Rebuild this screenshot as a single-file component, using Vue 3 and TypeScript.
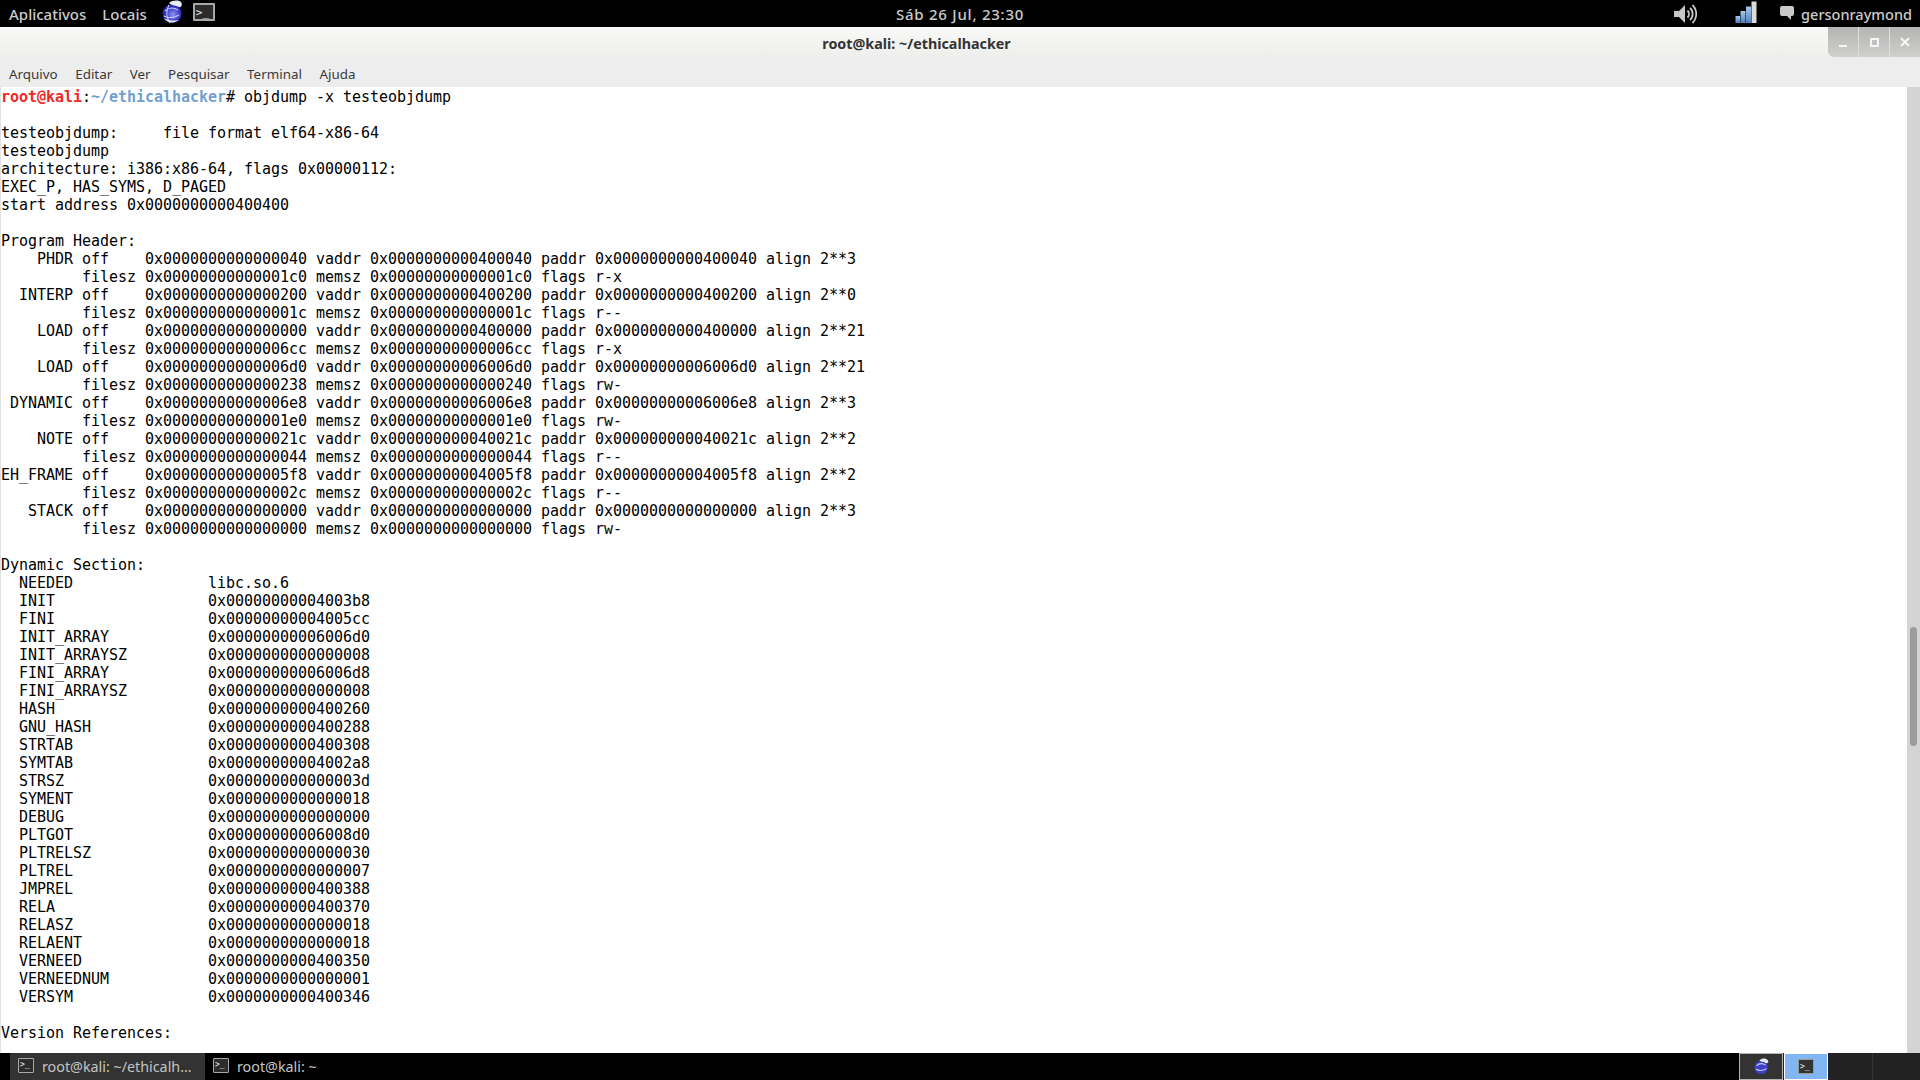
<script setup lang="ts">
const lines: string[] = [
  '',
  'testeobjdump:     file format elf64-x86-64',
  'testeobjdump',
  'architecture: i386:x86-64, flags 0x00000112:',
  'EXEC_P, HAS_SYMS, D_PAGED',
  'start address 0x0000000000400400',
  '',
  'Program Header:',
  '    PHDR off    0x0000000000000040 vaddr 0x0000000000400040 paddr 0x0000000000400040 align 2**3',
  '         filesz 0x00000000000001c0 memsz 0x00000000000001c0 flags r-x',
  '  INTERP off    0x0000000000000200 vaddr 0x0000000000400200 paddr 0x0000000000400200 align 2**0',
  '         filesz 0x000000000000001c memsz 0x000000000000001c flags r--',
  '    LOAD off    0x0000000000000000 vaddr 0x0000000000400000 paddr 0x0000000000400000 align 2**21',
  '         filesz 0x00000000000006cc memsz 0x00000000000006cc flags r-x',
  '    LOAD off    0x00000000000006d0 vaddr 0x00000000006006d0 paddr 0x00000000006006d0 align 2**21',
  '         filesz 0x0000000000000238 memsz 0x0000000000000240 flags rw-',
  ' DYNAMIC off    0x00000000000006e8 vaddr 0x00000000006006e8 paddr 0x00000000006006e8 align 2**3',
  '         filesz 0x00000000000001e0 memsz 0x00000000000001e0 flags rw-',
  '    NOTE off    0x000000000000021c vaddr 0x000000000040021c paddr 0x000000000040021c align 2**2',
  '         filesz 0x0000000000000044 memsz 0x0000000000000044 flags r--',
  'EH_FRAME off    0x00000000000005f8 vaddr 0x00000000004005f8 paddr 0x00000000004005f8 align 2**2',
  '         filesz 0x000000000000002c memsz 0x000000000000002c flags r--',
  '   STACK off    0x0000000000000000 vaddr 0x0000000000000000 paddr 0x0000000000000000 align 2**3',
  '         filesz 0x0000000000000000 memsz 0x0000000000000000 flags rw-',
  '',
  'Dynamic Section:',
  '  NEEDED               libc.so.6',
  '  INIT                 0x00000000004003b8',
  '  FINI                 0x00000000004005cc',
  '  INIT_ARRAY           0x00000000006006d0',
  '  INIT_ARRAYSZ         0x0000000000000008',
  '  FINI_ARRAY           0x00000000006006d8',
  '  FINI_ARRAYSZ         0x0000000000000008',
  '  HASH                 0x0000000000400260',
  '  GNU_HASH             0x0000000000400288',
  '  STRTAB               0x0000000000400308',
  '  SYMTAB               0x00000000004002a8',
  '  STRSZ                0x000000000000003d',
  '  SYMENT               0x0000000000000018',
  '  DEBUG                0x0000000000000000',
  '  PLTGOT               0x00000000006008d0',
  '  PLTRELSZ             0x0000000000000030',
  '  PLTREL               0x0000000000000007',
  '  JMPREL               0x0000000000400388',
  '  RELA                 0x0000000000400370',
  '  RELASZ               0x0000000000000018',
  '  RELAENT              0x0000000000000018',
  '  VERNEED              0x0000000000400350',
  '  VERNEEDNUM           0x0000000000000001',
  '  VERSYM               0x0000000000400346',
  '',
  'Version References:',
]
const menus: string[] = ['Arquivo', 'Editar', 'Ver', 'Pesquisar', 'Terminal', 'Ajuda']
</script>

<template>
  <div class="desktop">
    <header class="top-panel">
      <div class="top-left">
        <span class="panel-item">Aplicativos</span>
        <span class="panel-item locais">Locais</span>
        <svg class="globe" viewBox="0 0 24 24" width="24" height="24">
          <defs>
            <radialGradient id="globeFill" cx="0.55" cy="0.55" r="0.6">
              <stop offset="0" stop-color="#8f92ee" />
              <stop offset="0.6" stop-color="#3a3cc8" />
              <stop offset="1" stop-color="#1c1e8c" />
            </radialGradient>
          </defs>
          <circle cx="12" cy="13.500" r="9.500" fill="url(#globeFill)" />
          <path d="M5 11c3-3 8-4 13-1M4 16c4 2 10 2 15-1M9 5c-3 5-3 12 1 18" stroke="#c4c7f6" stroke-width="1.200" fill="none" />
          <path d="M4 18c3 5 10 6 15 2-5 1-10 1-15-2z" fill="#e4e6fa" />
          <path d="M9 3c4-3 9-3 12-1 2 3 0 6-2 5-3-2-7-1-10-4z" fill="#e9ebf4" />
        </svg>
        <span class="term-icon big"><i>&gt;_</i></span>
      </div>
      <span class="clock">Sáb 26 Jul, 23:30</span>
      <div class="top-right">
        <svg class="speaker" viewBox="0 0 24 24" width="24" height="24">
          <path d="M1 9h5l6-6v18l-6-6H1z" fill="#c8c8c8" />
          <path d="M14.500 8.500c2 2 2 5 0 7M17 6c3.500 3 3.500 9 0 12M19.500 3c5 5 5 13 0 18" stroke="#c8c8c8" stroke-width="1.800" fill="none" />
        </svg>
        <svg class="signal" viewBox="0 0 22 22" width="22" height="22">
          <defs>
            <linearGradient id="barFill" x1="0" y1="0" x2="0" y2="1">
              <stop offset="0" stop-color="#a9c8ec" />
              <stop offset="1" stop-color="#4f7fbd" />
            </linearGradient>
          </defs>
          <rect x="0.500" y="15" width="4.500" height="7" fill="url(#barFill)" />
          <rect x="5.500" y="10" width="5" height="12" fill="url(#barFill)" />
          <rect x="11" y="5.500" width="5" height="16.500" fill="url(#barFill)" />
          <rect x="16.500" y="0.500" width="5" height="21.500" fill="#dcdcd6" />
        </svg>
        <svg class="bubble" viewBox="0 0 16 16" width="16" height="16">
          <path d="M3 1h10a2 2 0 0 1 2 2v6a2 2 0 0 1-2 2h-1v4l-4-4H3a2 2 0 0 1-2-2V3a2 2 0 0 1 2-2z" fill="#c8c8c8" />
        </svg>
        <span class="user">gersonraymond</span>
      </div>
    </header>

    <div class="titlebar">
      <span class="title">root@kali: ~/ethicalhacker</span>
      <div class="win-buttons">
        <span class="win-btn"><b class="min"></b></span>
        <span class="win-btn"><b class="max"></b></span>
        <span class="win-btn">
          <svg viewBox="0 0 10 10" width="10" height="10"><path d="M1 1l8 8M9 1l-8 8" stroke="#f6f6f6" stroke-width="2" /></svg>
        </span>
      </div>
    </div>

    <nav class="menubar">
      <span v-for="m in menus" :key="m" class="menu">{{ m }}</span>
    </nav>

    <main class="terminal">
      <div class="output">
        <div class="line"><span class="red">root@kali</span>:<span class="blue">~/ethicalhacker</span># objdump -x testeobjdump</div>
        <div v-for="(l, i) in lines" :key="i" class="line">{{ l }}</div>
      </div>
      <aside class="scrollbar"><div class="thumb"></div></aside>
    </main>

    <footer class="bottom-panel">
      <div class="task active"><span class="term-icon"><i>&gt;_</i></span><span>root@kali: ~/ethicalh...</span></div>
      <div class="task"><span class="term-icon"><i>&gt;_</i></span><span>root@kali: ~</span></div>
      <div class="workspaces">
        <div class="ws ws-one">
          <svg viewBox="0 0 24 24" width="17" height="17">
            <circle cx="11.500" cy="13.500" r="9.500" fill="#3d3fc4" />
            <path d="M5 11c3-3 8-4 13-1M4 16c4 2 10 2 15-1" stroke="#c9cdf5" stroke-width="1.500" fill="none" />
            <path d="M9 3c4-3 9-3 12 0 2 3-1 5-3 4-2-2-6-1-9-4z" fill="#e6e8f2" />
          </svg>
        </div>
        <div class="ws ws-two"><span class="term-icon dark"><i>&gt;_</i></span></div>
        <div class="ws ws-three"></div>
        <div class="ws ws-four"></div>
      </div>
    </footer>
  </div>
</template>

<style scoped>
.desktop {
  width: 1920px;
  height: 1080px;
  display: flex;
  flex-direction: column;
  overflow: hidden;
  background: #fff;
  font-family: "Noto Sans", sans-serif;
}
.top-panel {
  height: 27px;
  flex: none;
  background: #000;
  color: #ccc;
  display: grid;
  grid-template-columns: 1fr auto 1fr;
  align-items: center;
  font-size: 15px;
  font-weight: 500;
}
.top-left {
  display: flex;
  align-items: center;
  padding-left: 9px;
}
.panel-item { margin-right: 16px; }
.locais { margin-right: 13px; }
.globe { margin: -3px 9px 0 0; }
.term-icon {
  width: 16px;
  height: 15px;
  flex: none;
  box-sizing: border-box;
  border: 1px solid #a8a8a8;
  background: #2c2c2c;
  border-radius: 1px;
  display: inline-flex;
  align-items: center;
  color: #eee;
}
.term-icon i {
  font: 8px/1 "DejaVu Sans Mono", monospace;
  padding-left: 1px;
}
.term-icon.big { width: 22px; height: 18px; border-width: 2px; margin-top: -3px; }
.term-icon.big i { font-size: 11px; }
.clock { letter-spacing: 0.76px; }
.top-right {
  display: flex;
  align-items: center;
  justify-content: flex-end;
  padding-right: 8px;
}
.speaker { margin-right: 38px; }
.signal { margin-right: 22px; margin-top: -3px; }
.bubble { margin-right: 6px; margin-top: -1px; }
.user { font-size: 14.500px; }
.titlebar {
  height: 30px;
  flex: none;
  position: relative;
  display: flex;
  justify-content: center;
  align-items: center;
  background: linear-gradient(#f9f9f8, #eeeeed);
  font-size: 14.300px;
  font-weight: 700;
  color: #333;
}
.title { margin-left: -87px; margin-top: 3px; }
.win-buttons {
  position: absolute;
  right: 0;
  top: 0;
  display: flex;
  height: 30px;
  border-radius: 0 0 0 6px;
  overflow: hidden;
  background: linear-gradient(#b4b5b2, #cfcfcd);
}
.win-btn {
  width: 30px;
  display: flex;
  align-items: center;
  justify-content: center;
  border-left: 1px solid #dfdfdd;
}
.win-btn:first-child { border-left: 0; }
.min { width: 8px; height: 2px; background: #f6f6f6; margin-top: 8px; }
.max { width: 5px; height: 5px; border: 2px solid #f6f6f6; }
.menubar {
  height: 30px;
  flex: none;
  display: flex;
  align-items: center;
  padding: 3px 0 0 9px;
  box-sizing: border-box;
  background: #ededed;
  color: #3a3a3a;
  font-size: 13.400px;
}
.menu { margin-right: 17.500px; }
.terminal {
  flex: 1;
  min-height: 0;
  display: flex;
  background: #fff;
  border-left: 1px solid #e2e2e2;
}
.output {
  flex: 1;
  overflow: hidden;
  font: 15px/18px "DejaVu Sans Mono", monospace;
  letter-spacing: -0.03px;
  color: #000;
  white-space: pre;
  padding-top: 1px;
}
.line { height: 18px; }
.red { color: #ef2929; font-weight: 700; }
.blue { color: #729fcf; font-weight: 700; }
.scrollbar {
  width: 13px;
  flex: none;
  background: #d4d4d4;
  padding-top: 540px;
  box-sizing: border-box;
}
.thumb {
  width: 7px;
  height: 119px;
  margin-left: 3px;
  border-radius: 4px;
  background: #9c9c9c;
}
.bottom-panel {
  height: 27px;
  flex: none;
  background: #000;
  color: #c4c4c4;
  display: flex;
  padding-left: 10px;
  font-size: 14.300px;
}
.task {
  width: 195px;
  display: flex;
  align-items: center;
  padding-left: 8px;
  box-sizing: border-box;
}
.task .term-icon { margin-right: 8px; margin-top: -3px; }
.active { background: #333; }
.workspaces {
  margin-left: auto;
  display: flex;
  height: 27px;
  background: #222;
}
.ws {
  width: 44px;
  height: 100%;
  box-sizing: border-box;
  display: flex;
  align-items: center;
  justify-content: center;
  margin-right: 1px;
}
.ws-one { background: #333; border: 1px solid #b5b5b5; }
.ws-two { background: #82b6f2; border: 1px solid #fff; }
.ws-three { background: #222; border-right: 1px solid #333; }
.ws-four { background: #222; width: 46px; margin-right: 0; }
.term-icon.dark { background: #333; border-color: #999; }
</style>
